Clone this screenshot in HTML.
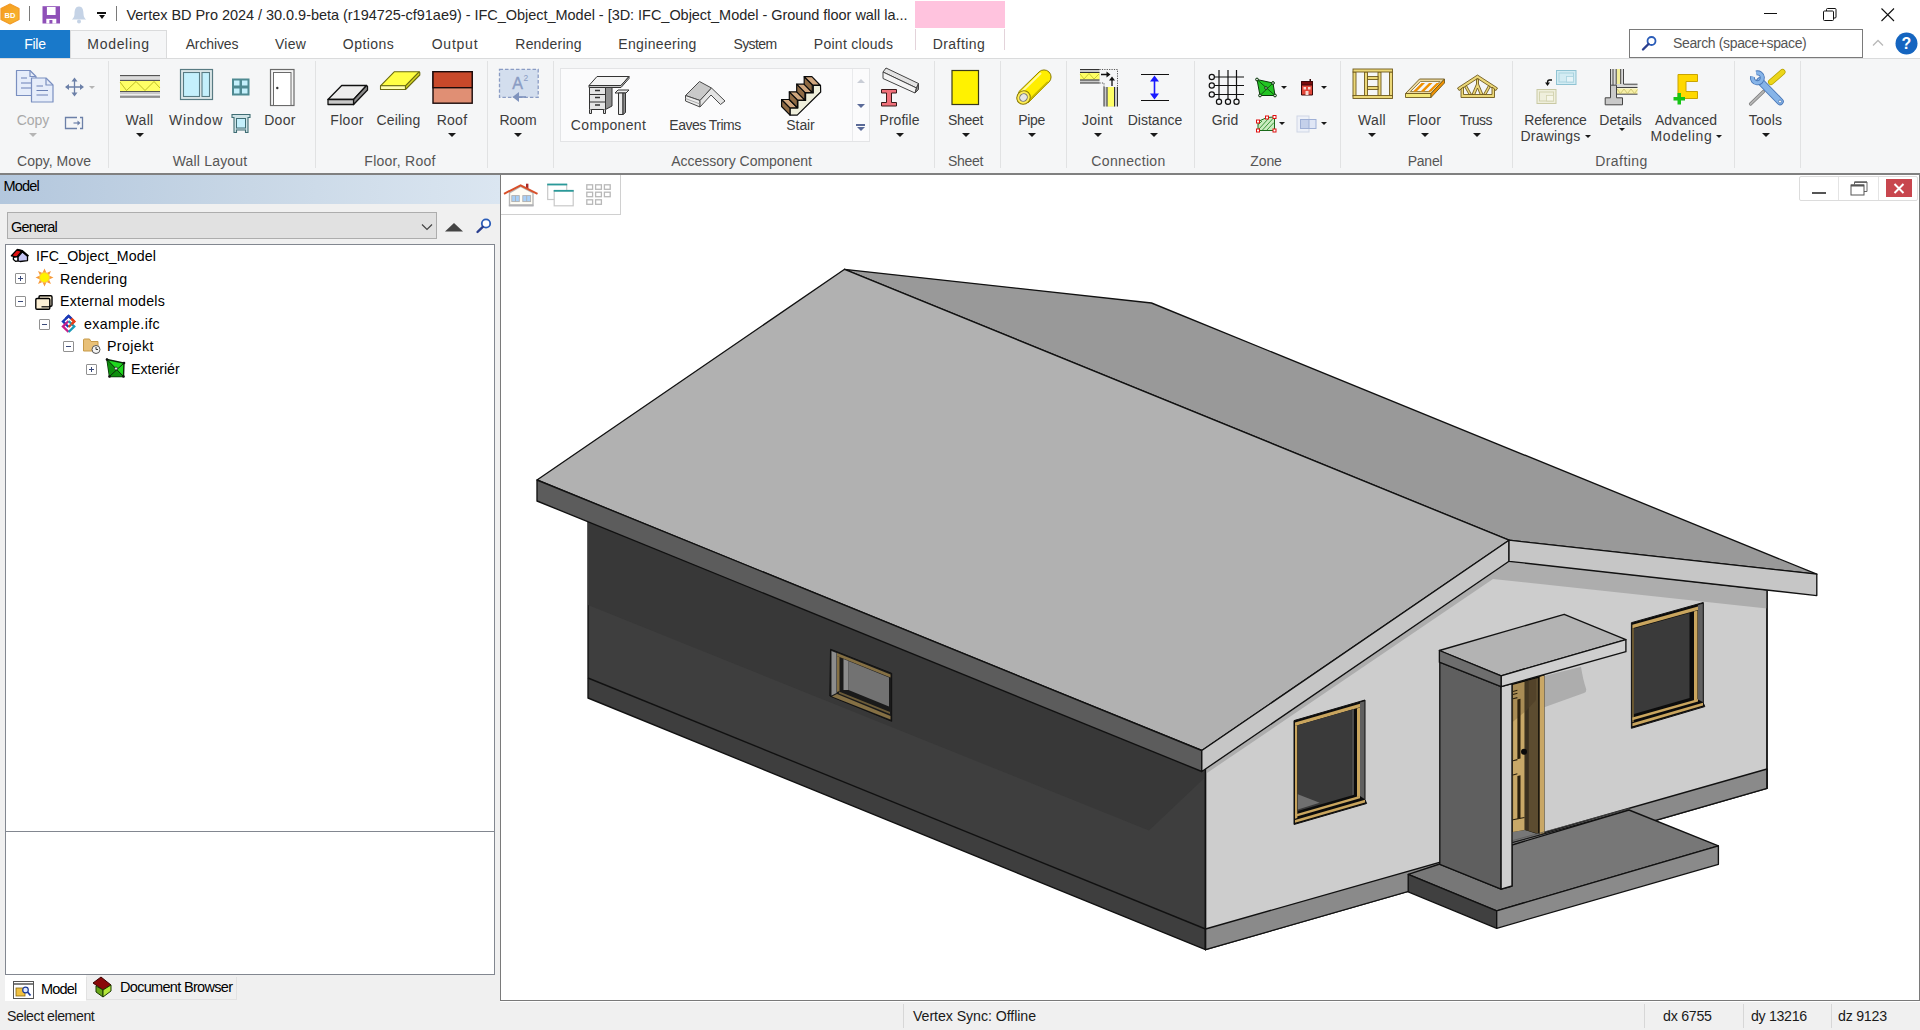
<!DOCTYPE html>
<html><head><meta charset="utf-8"><title>Vertex BD</title>
<style>
*{box-sizing:border-box;margin:0;padding:0}
html,body{width:1920px;height:1030px;overflow:hidden;background:#fff}
body{font-family:"Liberation Sans",sans-serif;font-size:12px;color:#222;position:relative}
.abs{position:absolute}
#title{position:absolute;left:0;top:0;width:1920px;height:30px;background:#fff}
#title .t{position:absolute;left:126.500px;top:6.500px;font-size:14.5px;color:#262626;white-space:nowrap}
#pink{position:absolute;left:915px;top:1px;width:90px;height:27px;background:#ffc3de}
#tabs{position:absolute;left:0;top:30px;width:1920px;height:28px;background:#fff}
.tab{position:absolute;top:0;height:27px;line-height:28px;font-size:14px;color:#3a3a3a;white-space:nowrap;transform:translateX(-50%)}
#filetab{position:absolute;left:0;top:-0.500px;width:70px;height:28px;background:#1979ca;color:#fff;text-align:center;line-height:28px;font-size:14px}
#modtab{position:absolute;left:70px;top:-0.500px;width:97px;height:29px;background:#f5f6f7;border:1px solid #dadbdc;border-bottom:none}
#drafttab{position:absolute;left:915px;top:-1px;width:90px;height:21px;border-left:1px solid #e3d3da;border-right:1px solid #e3d3da}
#ribbon{position:absolute;left:0;top:57.500px;width:1920px;height:116px;background:#f5f6f7;border-top:1px solid #dadbdc}
#ribline{position:absolute;left:0;top:173px;width:1920px;height:2px;background:#808080;z-index:5}
.sep{position:absolute;top:6px;width:1px;height:104px;background:#e1e2e3}
.lbl{position:absolute;font-size:14px;color:#3c3c3c;white-space:nowrap;transform:translateX(-50%);line-height:16px;text-align:center}
.lbl.dis{color:#a9a9a9}
.grp{position:absolute;top:96px;font-size:14px;color:#555;white-space:nowrap;transform:translateX(-50%);line-height:16px}
.dd{position:absolute;width:0;height:0;border-left:4px solid transparent;border-right:4px solid transparent;border-top:4px solid #1a1a1a;transform:translateX(-50%)}
.dd.s{border-left-width:3px;border-right-width:3px;border-top-width:3px}
.dd.g{border-top-color:#b5b5b5}
svg{position:absolute;overflow:visible}
#left{position:absolute;left:0;top:174px;width:500px;height:828px;background:#f0f0f0}
#lhead{position:absolute;left:0;top:1px;width:500px;height:29px;background:linear-gradient(90deg,#b3c7dd 0%,#c8d7e6 50%,#dbe6f1 100%)}
#lhead span{position:absolute;left:3.500px;top:2.500px;font-size:14.5px;color:#000;white-space:nowrap}
#combo{position:absolute;left:7px;top:38px;width:430px;height:27px;background:#e1e1e1;border:1px solid #adadad}
#combo span{position:absolute;left:3px;top:6px;font-size:14.5px;color:#000;white-space:nowrap}
#tree{position:absolute;left:5px;top:70px;width:490px;height:588px;background:#fff;border:1px solid #828790}
#tree2{position:absolute;left:5px;top:657px;width:490px;height:144px;background:#fff;border:1px solid #828790}
.tn{position:absolute;font-size:14.2px;color:#000;white-space:nowrap;line-height:18px}
.ex{position:absolute;width:11px;height:11px;border:1px solid #919191;background:#fff;border-radius:1px}
.ex:before{content:"";position:absolute;left:2px;top:4px;width:5px;height:1px;background:#3a4a7a}
.ex.p:after{content:"";position:absolute;left:4px;top:2px;width:1px;height:5px;background:#3a4a7a}
#view{position:absolute;left:500px;top:174px;width:1420px;height:827px;background:#fff;border:1px solid #7a7a7a;border-top:none}
#status{position:absolute;left:0;top:1002px;width:1920px;height:28px;background:#f0f0f0}
#status span{position:absolute;top:6px;font-size:14.2px;color:#1a1a1a;white-space:nowrap}
.ssep{position:absolute;top:2px;width:1px;height:24px;background:#d7d7d7}
</style></head><body>
<div id="title">
<svg style="left:0;top:3px" width="22" height="24" viewBox="0 0 22 24"><defs><linearGradient id="bdg" x1="0" y1="0" x2="1" y2="1"><stop offset="0" stop-color="#f59a1e"></stop><stop offset="1" stop-color="#f7b731"></stop></linearGradient></defs><path d="M10 1 L19 5.5 L19 16.5 L10 21 L1 16.5 L1 5.5 Z" fill="url(#bdg)" stroke="#f39a25" stroke-width="1.2" stroke-linejoin="round"></path><text x="10" y="14.5" font-family="Liberation Sans" font-size="7.5" font-weight="bold" fill="#fff" text-anchor="middle">BD</text></svg>
<div class="abs" style="left:29px;top:6px;width:1px;height:15px;background:#7a7a7a"></div>
<svg style="left:42px;top:6px" width="19" height="18" viewBox="42 6 19 18"><rect x="42.500" y="6.200" width="17.500" height="17.300" fill="#8f50b8"></rect><rect x="46.900" y="7" width="8.700" height="8" fill="#fff"></rect><rect x="46.300" y="18.800" width="10" height="4.700" fill="#fff"></rect><rect x="49.400" y="20" width="3" height="3.500" fill="#8f50b8"></rect></svg>
<svg style="left:71px;top:6px" width="16" height="19" viewBox="0 0 16 19"><path d="M8 0.5 C4.5 0.5 3.5 4 3.5 8 C3.5 11 2 12.5 0.8 13.5 H15.2 C14 12.5 12.500 11 12.500 8 C12.500 4 11.500 0.5 8 0.5 Z" fill="#c5d3e6"></path><circle cx="8" cy="15.500" r="2" fill="#c5d3e6"></circle></svg>
<div class="abs" style="left:97px;top:12px;width:9px;height:1.5px;background:#111"></div>
<div class="dd" style="left:101.500px;top:15px;border-top-color:#111;border-left-width:3.5px;border-right-width:3.5px"></div>
<div class="abs" style="left:116px;top:6px;width:1px;height:15px;background:#7a7a7a"></div>
<div class="t" style="letter-spacing: -0.034px;">Vertex BD Pro 2024 / 30.0.9-beta (r194725-cf91ae9) - IFC_Object_Model - [3D: IFC_Object_Model - Ground floor wall la...</div>
<div id="pink"></div>
<div class="abs" style="left:1764px;top:13px;width:13px;height:1px;background:#111"></div>
<svg style="left:1823px;top:7.500px" width="14" height="13" viewBox="0 0 14 13"><path d="M3.500 3 V1.5 Q3.500 0.500 4.500 0.500 H12 Q13 0.500 13 1.500 V9 Q13 10 12 10 H10.500" fill="none" stroke="#111" stroke-width="1"></path><rect x="0.500" y="3" width="10" height="9.500" rx="1" fill="#fff" stroke="#111" stroke-width="1"></rect></svg>
<svg style="left:1881px;top:7.500px" width="14" height="14" viewBox="0 0 14 14"><path d="M0.500 0.500 L13 13 M13 0.500 L0.500 13" stroke="#111" stroke-width="1.1"></path></svg>
</div>
<div id="tabs">
<div id="modtab"></div>
<div id="filetab"><span style="letter-spacing: -0.316px;">File</span></div>
<div id="drafttab"></div>
<div class="tab" style="left: 118.5px; letter-spacing: 0.684px;">Modeling</div>
<div class="tab" style="left: 212px; letter-spacing: -0.123px;">Archives</div>
<div class="tab" style="left: 290.5px; letter-spacing: 0.227px;">View</div>
<div class="tab" style="left: 368.5px; letter-spacing: 0.436px;">Options</div>
<div class="tab" style="left: 455px; letter-spacing: 0.778px;">Output</div>
<div class="tab" style="left: 548.5px; letter-spacing: 0.188px;">Rendering</div>
<div class="tab" style="left: 657.5px; letter-spacing: 0.324px;">Engineering</div>
<div class="tab" style="left: 755px; letter-spacing: -0.615px;">System</div>
<div class="tab" style="left: 853.5px; letter-spacing: 0.252px;">Point clouds</div>
<div class="tab" style="left: 959px; letter-spacing: 0.459px;">Drafting</div>
<div class="abs" style="left:1629px;top:-1px;width:234px;height:29px;background:#fff;border:1px solid #7a7a7a"></div>
<svg style="left:1641px;top:5px" width="18" height="18" viewBox="0 0 18 18"><circle cx="10.500" cy="6" r="4" fill="#fff" stroke="#2a5cb8" stroke-width="1.800"></circle><path d="M7.500 9 L2 14.500" stroke="#2a3f8f" stroke-width="2.400" stroke-linecap="round"></path></svg>
<div class="abs" style="left: 1673px; top: 5px; font-size: 14px; color: rgb(85, 85, 85); white-space: nowrap; letter-spacing: -0.353px;">Search (space+space)</div>
<svg style="left:1872px;top:9px" width="12" height="8" viewBox="0 0 12 8"><path d="M1 6.500 L6 1.500 L11 6.500" fill="none" stroke="#b9b9b9" stroke-width="1.300"></path></svg>
<svg style="left:1895px;top:2px" width="23" height="23" viewBox="0 0 23 23"><circle cx="11.500" cy="11.500" r="11" fill="#1565c0"></circle><text x="11.500" y="17" font-family="Liberation Sans" font-size="16" font-weight="bold" fill="#fff" text-anchor="middle">?</text></svg>
</div>
<div id="ribbon"></div><div id="ribline"></div>
<!-- separators -->
<div class="sep" style="left:108px;top:61px;height:107px"></div><div class="sep" style="left:315px;top:61px;height:107px"></div><div class="sep" style="left:487px;top:61px;height:107px"></div><div class="sep" style="left:553px;top:61px;height:107px"></div><div class="sep" style="left:934px;top:61px;height:107px"></div><div class="sep" style="left:1000px;top:61px;height:107px"></div><div class="sep" style="left:1066px;top:61px;height:107px"></div><div class="sep" style="left:1194px;top:61px;height:107px"></div><div class="sep" style="left:1340px;top:61px;height:107px"></div><div class="sep" style="left:1512px;top:61px;height:107px"></div><div class="sep" style="left:1734px;top:61px;height:107px"></div><div class="sep" style="left:1800px;top:61px;height:107px"></div>
<!-- group labels -->
<div class="grp" style="left: 54px; top: 153px; letter-spacing: 0.033px;">Copy, Move</div>
<div class="grp" style="left: 210px; top: 153px; letter-spacing: 0.189px;">Wall Layout</div>
<div class="grp" style="left: 400px; top: 153px; letter-spacing: 0.256px;">Floor, Roof</div>
<div class="grp" style="left: 741.5px; top: 153px; letter-spacing: -0.008px;">Accessory Component</div>
<div class="grp" style="left: 965.5px; top: 153px; letter-spacing: -0.319px;">Sheet</div>
<div class="grp" style="left: 1128.5px; top: 153px; letter-spacing: 0.347px;">Connection</div>
<div class="grp" style="left: 1266px; top: 153px; letter-spacing: -0.055px;">Zone</div>
<div class="grp" style="left: 1425px; top: 153px; letter-spacing: -0.222px;">Panel</div>
<div class="grp" style="left: 1621.5px; top: 153px; letter-spacing: 0.459px;">Drafting</div>
<!-- button labels -->
<div class="lbl dis" style="left: 33px; top: 112px; letter-spacing: -0.097px;">Copy</div><div class="dd g" style="left:33px;top:133px"></div>
<div class="lbl" style="left: 139.5px; top: 112px; letter-spacing: 0.324px;">Wall</div><div class="dd" style="left:139.500px;top:133px"></div>
<div class="lbl" style="left: 196px; top: 112px; letter-spacing: 0.701px;">Window</div>
<div class="lbl" style="left: 280px; top: 112px; letter-spacing: 0.335px;">Door</div>
<div class="lbl" style="left: 347px; top: 112px; letter-spacing: 0.279px;">Floor</div>
<div class="lbl" style="left: 398.5px; top: 112px; letter-spacing: 0.17px;">Ceiling</div>
<div class="lbl" style="left: 452px; top: 112px; letter-spacing: 0.28px;">Roof</div><div class="dd" style="left:452px;top:133px"></div>
<div class="lbl" style="left: 518px; top: 112px; letter-spacing: -0.09px;">Room</div><div class="dd" style="left:518px;top:133px"></div>
<div class="abs" style="left:560px;top:68px;width:310px;height:74px;background:#fbfbfc;border:1px solid #e3e4e6"></div>
<div class="abs" style="left:852px;top:69px;width:1px;height:72px;background:#e9eaec"></div>
<div class="lbl" style="left: 608.5px; top: 117px; letter-spacing: 0.323px;">Component</div>
<div class="lbl" style="left: 705px; top: 117px; letter-spacing: -0.52px;">Eaves Trims</div>
<div class="lbl" style="left: 800.5px; top: 117px; letter-spacing: -0.099px;">Stair</div>
<div class="dd" style="left:860.500px;top:79px;border-top:none;border-bottom:4px solid #c9cdd6"></div>
<div class="dd" style="left:860.500px;top:104px;border-top-color:#5a6a98"></div>
<div class="abs" style="left:856px;top:124px;width:9px;height:1.500px;background:#5a6a98"></div>
<div class="dd" style="left:860.500px;top:127px;border-top-color:#5a6a98"></div>
<div class="lbl" style="left: 899.5px; top: 112px; letter-spacing: 0.045px;">Profile</div><div class="dd" style="left:899.500px;top:133px"></div>
<div class="lbl" style="left: 965.5px; top: 112px; letter-spacing: -0.319px;">Sheet</div><div class="dd" style="left:965.500px;top:133px"></div>
<div class="lbl" style="left: 1031.5px; top: 112px; letter-spacing: -0.333px;">Pipe</div><div class="dd" style="left:1031.500px;top:133px"></div>
<div class="lbl" style="left: 1097.5px; top: 112px; letter-spacing: 0.284px;">Joint</div><div class="dd" style="left:1097.500px;top:133px"></div>
<div class="lbl" style="left: 1155px; top: 112px; letter-spacing: 0.029px;">Distance</div><div class="dd" style="left:1154px;top:133px"></div>
<div class="lbl" style="left: 1225px; top: 112px; letter-spacing: 0.062px;">Grid</div>
<div class="lbl" style="left: 1372px; top: 112px; letter-spacing: 0.324px;">Wall</div><div class="dd" style="left:1372px;top:133px"></div>
<div class="lbl" style="left: 1424.5px; top: 112px; letter-spacing: 0.279px;">Floor</div><div class="dd" style="left:1424.500px;top:133px"></div>
<div class="lbl" style="left: 1476px; top: 112px; letter-spacing: -0.437px;">Truss</div><div class="dd" style="left:1476.500px;top:133px"></div>
<div class="lbl" style="left: 1555.5px; top: 112px; letter-spacing: -0.255px;">Reference</div>
<div class="lbl" style="left: 1550.5px; top: 128px; letter-spacing: 0.205px;">Drawings</div><div class="dd s" style="left:1588px;top:135px"></div>
<div class="lbl" style="left: 1620.5px; top: 112px; letter-spacing: -0.071px;">Details</div><div class="dd s" style="left:1621.500px;top:128px"></div>
<div class="lbl" style="left: 1686px; top: 112px; letter-spacing: -0.048px;">Advanced</div>
<div class="lbl" style="left: 1681.5px; top: 128px; letter-spacing: 0.634px;">Modeling</div><div class="dd s" style="left:1719px;top:135px"></div>
<div class="lbl" style="left: 1765.5px; top: 112px; letter-spacing: 0.163px;">Tools</div><div class="dd" style="left:1765.500px;top:133px"></div>
<!-- small dropdown arrows -->
<div class="dd s g" style="left:92px;top:85.500px"></div>
<div class="dd s" style="left:1284px;top:85.500px"></div><div class="dd s" style="left:1324px;top:85.500px"></div>
<div class="dd s" style="left:1282px;top:121.500px"></div><div class="dd s" style="left:1324px;top:121.500px"></div>
<svg style="left:0;top:58px" width="1920" height="115" viewBox="0 58 1920 115">
<!-- Copy -->
<g fill="#e6edfa" stroke="#7a8fc0" stroke-width="1.200" stroke-linejoin="round">
<path d="M16.500 70.500 H30 L36 76.500 V95.500 H16.500 Z"></path><path d="M30 70.500 V76.500 H36" fill="none"></path>
<path d="M21 78 H27 M21 83 H31 M21 88 H31" stroke="#6a80b5" stroke-width="1.200"></path>
<path d="M31.500 78 H46 L53 85 V102 H31.500 Z"></path><path d="M46 78 V85 H53" fill="none"></path>
<path d="M36.500 86 H43 M36.500 90.500 H48 M36.500 95 H48" stroke="#6a80b5" stroke-width="1.200"></path>
</g>
<!-- Move -->
<g stroke="#6c80a8" stroke-width="1.300" fill="#6c80a8" stroke-linejoin="miter">
<path d="M74.500 79 V95 M66.500 87 H82.500" fill="none"></path>
<path d="M74.500 77.500 L71.500 81.500 H77.500 Z M74.500 96.500 L71.500 92.500 H77.500 Z M65 87 L69 84 V90 Z M84 87 L80 84 V90 Z" stroke="none"></path>
</g>
<!-- small move-rect -->
<g stroke="#6c80a8" stroke-width="1.300" fill="none">
<path d="M77 117.500 H65.500 V128.500 H77 M80 117.500 H82.500 V128.500 H80"></path>
<path d="M73.500 123 H79" stroke-width="1.200"></path><path d="M80.500 123 L77.500 120.500 V125.500 Z" fill="#6c80a8" stroke="none"></path>
</g>
<!-- Wall -->
<rect x="120" y="75" width="40" height="22.500" fill="#c9c9c9"></rect>
<rect x="120" y="80.500" width="40" height="11" fill="#ffff66"></rect>
<path d="M120 75.500 H160 M120 80.500 H160 M120 91.500 H160 M120 97 H160" stroke="#555" stroke-width="1"></path>
<path d="M120 78 H160 M120 94.500 H160" stroke="#eee" stroke-width="1"></path>
<path d="M120 82 L126.500 90.500 L136 81.500 L145 90.500 L154 81.500 L160 88" fill="none" stroke="#b5b51e" stroke-width="0.900"></path>
<!-- Window -->
<rect x="180.500" y="69.500" width="32" height="30" fill="#dfe9ea" stroke="#587b83" stroke-width="1.200"></rect>
<rect x="183.500" y="72.500" width="16" height="24" fill="#c4f0fc" stroke="#587b83" stroke-width="1.100"></rect>
<rect x="202" y="72.500" width="7.500" height="24" fill="#c4f0fc" stroke="#587b83" stroke-width="1.100"></rect>
<!-- small window grid -->
<rect x="232" y="78.500" width="17.500" height="17" fill="#4f8a92"></rect>
<rect x="234" y="80.500" width="5.500" height="5" fill="#c4f0fc"></rect><rect x="242" y="80.500" width="5.500" height="5" fill="#c4f0fc"></rect><rect x="234" y="88.500" width="5.500" height="5" fill="#c4f0fc"></rect><rect x="242" y="88.500" width="5.500" height="5" fill="#c4f0fc"></rect>
<!-- small frame icon -->
<path d="M232 114.500 H250 V117.500 H248 V132.500 H245.500 V130 H236.500 V132.500 H234 V117.500 H232 Z" fill="#cfe3e6" stroke="#3f6d74" stroke-width="1.100"></path>
<rect x="236.500" y="118.500" width="9" height="9.500" fill="#c4f0fc" stroke="#3f6d74" stroke-width="1"></rect>
<!-- Door -->
<rect x="270.500" y="69.500" width="23.500" height="36" fill="#f4f4f4" stroke="#6a6a6a" stroke-width="1.200"></rect>
<rect x="273.500" y="72.500" width="17.500" height="33" fill="#fff" stroke="#6a6a6a" stroke-width="1"></rect>
<circle cx="277.300" cy="88" r="1.200" fill="#333"></circle>
<!-- Floor -->
<path d="M328 99.500 L341.700 85.500 H366.500 L353.600 99.500 Z" fill="#ededed" stroke="#111" stroke-width="1.300" stroke-linejoin="round"></path>
<path d="M328 99.500 H353.600 V104.500 H328 Z" fill="#c9c9c9" stroke="#111" stroke-width="1.300" stroke-linejoin="round"></path>
<path d="M353.600 99.500 L366.500 85.500 L367.500 86.500 V90 L353.600 104.500 Z" fill="#8a8a8a" stroke="#111" stroke-width="1.300" stroke-linejoin="round"></path>
<!-- Ceiling -->
<path d="M380.500 85.800 L394.200 71.800 H419.200 L405.500 85.800 Z" fill="#ffff44" stroke="#6a6a10" stroke-width="1.100" stroke-linejoin="round"></path>
<path d="M380.500 85.800 H405.500 V89.500 H380.500 Z" fill="#ffffb0" stroke="#6a6a10" stroke-width="1.100" stroke-linejoin="round"></path>
<path d="M405.500 85.800 L419.200 71.800 L419.800 72.500 V75 L405.500 89.500 Z" fill="#d8d820" stroke="#6a6a10" stroke-width="1.100" stroke-linejoin="round"></path>
<!-- Roof -->
<rect x="433" y="71.700" width="39.200" height="31.500" fill="#e08f74" stroke="#1a0a0a" stroke-width="1.400"></rect>
<rect x="433" y="71.700" width="39.200" height="16" fill="#c8492a" stroke="#1a0a0a" stroke-width="1.400"></rect>
<!-- Room -->
<rect x="499.500" y="69.300" width="38.700" height="28" fill="#d3deee" stroke="#8a9cc4" stroke-width="1.300" stroke-dasharray="3.500 2"></rect>
<text x="517.500" y="89" font-family="Liberation Sans" font-size="16" fill="#8a9cc4" stroke="#8a9cc4" stroke-width="0.400" text-anchor="middle">A</text>
<text x="525.800" y="80.500" font-family="Liberation Sans" font-size="8.500" fill="#8a9cc4" text-anchor="middle">2</text>
<path d="M517 97 H526" stroke="#7f93bd" stroke-width="1.600"></path><path d="M512.500 97 L519 92 V102 Z" fill="#7f93bd"></path>
<!-- Component (desk) -->
<g stroke="#333" stroke-width="1" stroke-linejoin="round">
<path d="M589 85.500 L597 76.500 H629 L621 85.500 Z" fill="#f4f4f4"></path>
<path d="M589 85.500 H621 L629 76.500 V78.500 L621 87.500 H589 Z" fill="#c8c8c8"></path>
<rect x="589.500" y="87.500" width="16" height="22" fill="#e4e4e4"></rect>
<path d="M605.500 87.500 H612 V106 L605.500 109.500 Z" fill="#8f8f8f"></path>
<path d="M589.500 94.500 H605.500 M589.500 102 H605.500" fill="none"></path>
<path d="M595 90.500 H600 M595 97.500 H600 M595 105 H600" stroke-width="1.300"></path>
<path d="M589.500 109.500 V113.500 H591.500 V109.500 M603.500 109.500 V113.500 H605.500 V109.500" fill="#ddd"></path>
<path d="M615 93 L618 90 H629 L626 93 Z" fill="#f0f0f0"></path>
<path d="M618.500 93 H623 V114.500 H618.500 Z" fill="#e9e9e9"></path><path d="M623 93 H625.500 V112.500 L623 114.500 Z" fill="#8f8f8f"></path>
</g>
<!-- Eaves trims -->
<g stroke="#4a4a4a" stroke-width="1" stroke-linejoin="round">
<path d="M685.500 95.500 L699.500 81.500 L711.500 88 L700 100.500 Z" fill="#c9c9c9"></path>
<path d="M685.500 95.500 L700 100.500 V107 L685.500 101 Z" fill="#ececec"></path>
<path d="M700 100.500 L711.500 88 L725 101 L720.500 104.500 L711 95 L700 107 Z" fill="#e4e4e4"></path>
<path d="M685.500 98.500 L700 104" stroke="#9a9a9a" stroke-width="0.800" fill="none"></path>
</g>
<!-- Stair -->
<g stroke="#0a0a0a" stroke-width="1.200" stroke-linejoin="round"><path d="M790.0 107.9 L797.9 107.9 L797.9 100.4 L805.6 100.4 L805.6 93.0 L813.3 93.0 L813.3 85.3 L820.5 85.3 L820.7 92.0 L797.2 115.1 L790.0 115.1 Z" fill="#eeeedb"></path><path d="M781.6 99.5 L790.0 107.9 L790.0 115.1 L781.6 106.5 Z" fill="#8f6a44"></path><path d="M781.6 99.5 L789.3 99.5 L797.4 107.8 L790.0 107.9 Z" fill="#d0a67e"></path><path d="M789.3 91.8 L797.4 100.0 L797.4 107.6 L789.3 99.5 Z" fill="#8f6a44"></path><path d="M789.3 91.8 L797.0 91.8 L805.1 100.1 L797.7 100.2 Z" fill="#d0a67e"></path><path d="M796.7 84.2 L804.9 92.4 L804.9 100.1 L796.7 91.9 Z" fill="#8f6a44"></path><path d="M796.7 84.2 L804.4 84.2 L812.6 92.5 L805.1 92.6 Z" fill="#d0a67e"></path><path d="M804.2 76.7 L812.3 84.8 L812.3 92.5 L804.2 84.3 Z" fill="#8f6a44"></path><path d="M804.2 76.7 L811.9 76.7 L820.0 85.0 L812.6 85.0 Z" fill="#d0a67e"></path></g>
<!-- Profile -->
<g stroke="#444" stroke-width="1" stroke-linejoin="round">
<path d="M883 72 L886 68 L918.500 83.500 L916.500 88 Z" fill="#e3e3e3"></path>
<path d="M883 72 L916.500 88 L915 93 L883 78.500 Z" fill="#f4f4f4"></path>
<path d="M916.500 88 L918.500 83.500 V89.500 L915 93 Z" fill="#8a8a8a"></path>
<path d="M881.500 89.500 H896.500 V93 H891.500 V102.500 H896.500 V106 H881.500 V102.500 H886.500 V93 H881.500 Z" fill="#f0707a" stroke="#3a1a1a"></path>
</g>
<!-- Sheet -->
<rect x="952" y="70.500" width="26.500" height="34" fill="#fff200" stroke="#3a3a1a" stroke-width="1.200"></rect>
<!-- Pipe -->
<g stroke="#8a7a00" stroke-width="1">
<path d="M1018.500 92 L1039 72 A7 7 0 0 1 1049 82 L1028.500 102.500 Z" fill="#ffee00"></path>
<path d="M1021 92.500 L1041 73" stroke="#fff9a0" stroke-width="2" fill="none"></path>
<path d="M1027.500 102 L1048 82" stroke="#c9b800" stroke-width="2" fill="none"></path>
<ellipse cx="1023.500" cy="97.500" rx="7" ry="6.500" transform="rotate(-45 1023.500 97.500)" fill="#ffee55"></ellipse>
<ellipse cx="1023.500" cy="97.500" rx="4" ry="3.600" transform="rotate(-45 1023.500 97.500)" fill="#e6e6e6" stroke="#777"></ellipse>
</g>
<!-- Joint -->
<rect x="1080" y="69.500" width="19.500" height="13.500" fill="#c9c9c9"></rect>
<rect x="1080" y="73" width="19.500" height="6.500" fill="#ffff66"></rect>
<path d="M1080 69.500 H1099.500 M1080 72.500 H1099.500 M1080 80 H1099.500 M1080 83 H1099.500" stroke="#333" stroke-width="1"></path>
<path d="M1080 74 L1084 79 L1089 73.500 L1094 79 L1099 74" stroke="#b5b51e" stroke-width="0.700" fill="none"></path>
<rect x="1104" y="87" width="13.500" height="19.500" fill="#c9c9c9"></rect>
<rect x="1107.500" y="87" width="6.500" height="19.500" fill="#ffff66"></rect>
<path d="M1104 87 V106.500 M1107 87 V106.500 M1114.500 87 V106.500 M1117.500 87 V106.500" stroke="#333" stroke-width="1"></path>
<path d="M1099.500 69.500 H1117.500 V87 M1099.500 83 H1104 V87" stroke="#555" stroke-width="1" stroke-dasharray="1.200 1.200" fill="none"></path>
<path d="M1101 74.500 H1107 M1112 86 V80" stroke="#111" stroke-width="1.300"></path>
<path d="M1110.500 74.500 L1106.500 71.500 V77.500 Z M1112 76.500 L1109 80.500 H1115 Z" fill="#111"></path>
<!-- Distance -->
<path d="M1141 74.500 H1169 M1141 100.500 H1169" stroke="#111" stroke-width="1.200"></path>
<path d="M1154.500 79 V96" stroke="#1a1aff" stroke-width="1.600"></path>
<path d="M1154.500 75.500 L1150 81.500 H1159 Z M1154.500 99.500 L1150 93.500 H1159 Z" fill="#1a1aff"></path>
<!-- Grid -->
<g stroke="#111" stroke-width="1.200" fill="#f5f6f7">
<path d="M1219 70 V99 M1228 70 V99 M1236.500 70 V99 M1214.500 77 H1244 M1214.500 85.500 H1244 M1214.500 94.500 H1244" fill="none"></path>
<circle cx="1211.800" cy="77" r="2.600"></circle><circle cx="1211.800" cy="85.500" r="2.600"></circle><circle cx="1211.800" cy="94.500" r="2.600"></circle>
<circle cx="1219" cy="101.800" r="2.600"></circle><circle cx="1228" cy="101.800" r="2.600"></circle><circle cx="1236.500" cy="101.800" r="2.600"></circle>
</g>
<!-- green zone -->
<g stroke="#0a3a0a" stroke-width="1">
<path d="M1257 79.500 L1273 83 L1275 95.500 L1260 95.500 Z" fill="#22c422"></path>
<path d="M1257 79.500 L1275 95.500 M1273 83 L1260 95.500" fill="none" stroke-width="0.800"></path>
<circle cx="1257" cy="79.500" r="1.400" fill="#ddd"></circle><circle cx="1273" cy="83" r="1.400" fill="#ddd"></circle><circle cx="1275" cy="95.500" r="1.400" fill="#ddd"></circle><circle cx="1260" cy="95.500" r="1.400" fill="#ddd"></circle><circle cx="1266" cy="88" r="1.300" fill="#ddd"></circle>
</g>
<!-- red building -->
<path d="M1301.500 81.500 H1312.500 V95 H1301.500 Z" fill="#e2473a" stroke="#3a0a0a" stroke-width="1"></path>
<path d="M1301.500 81.500 H1312.500 V85 H1301.500 Z" fill="#7a0a0a" stroke="#3a0a0a" stroke-width="1"></path>
<rect x="1309.500" y="79" width="1.500" height="2.500" fill="#3a0a0a"></rect>
<rect x="1303.500" y="87" width="2.500" height="2.500" fill="#f8d8d0"></rect><rect x="1308" y="87" width="2.500" height="2.500" fill="#f8d8d0"></rect><rect x="1305.500" y="91" width="3" height="4" fill="#f8d8d0"></rect>
<!-- green hatch -->
<path d="M1258 121.500 L1267 117.500 L1274.500 117 V130.500 H1258 Z" fill="#c9ecc0" stroke="#1a6a1a" stroke-width="1"></path>
<path d="M1259 129 L1268 119 M1262.500 130 L1273 118.500 M1267 130 L1274 122.500 M1258.500 124.500 L1262 121" stroke="#2a8a2a" stroke-width="0.900"></path>
<g fill="#fff" stroke="#e01010" stroke-width="1"><rect x="1256.500" y="120" width="3" height="3"></rect><rect x="1265.500" y="116" width="3" height="3"></rect><rect x="1273" y="115.500" width="3" height="3"></rect><rect x="1273" y="129" width="3" height="3"></rect><rect x="1256.500" y="129" width="3" height="3"></rect></g>
<!-- blue squares -->
<rect x="1297" y="116" width="12" height="16" fill="#eef1f8" stroke="#cfd6e6" stroke-width="1"></rect>
<rect x="1300.500" y="119.500" width="15.500" height="9" fill="#dfe6f5" stroke="#9fb0d6" stroke-width="1"></rect>
<rect x="1300.500" y="119.500" width="8.500" height="9" fill="#c4d0ea" stroke="#9fb0d6" stroke-width="1"></rect>
<!-- Panel wall -->
<g fill="#ecd878" stroke="#6f5a1e" stroke-width="0.900">
<rect x="1353" y="72" width="3" height="24"></rect><rect x="1364.500" y="72" width="3" height="24"></rect><rect x="1378" y="72" width="3" height="24"></rect><rect x="1389.500" y="72" width="3" height="24"></rect>
<rect x="1367.500" y="76.500" width="10.500" height="3"></rect><rect x="1367.500" y="86.500" width="10.500" height="3"></rect>
<rect x="1353" y="69" width="39.500" height="3"></rect><rect x="1353" y="95.500" width="39.500" height="3"></rect>
</g>
<!-- Panel floor -->
<g stroke="#6f5a1e" stroke-width="0.900" stroke-linejoin="round">
<path d="M1405.500 93.500 L1419.500 79 H1444.500 L1431 93.500 Z" fill="#ecd9a0"></path>
<path d="M1410.500 91.500 L1420.500 81.500 H1440 L1430 91.500 Z" fill="#f5f6f7" stroke-width="0.700"></path>
<path d="M1413 91.500 L1421.500 83 H1425 L1416.500 91.500 Z M1420.500 91.500 L1429 83 H1432.500 L1424 91.500 Z M1428 91.500 L1436.500 83 H1439.500 L1431 91.500 Z" fill="#f09000" stroke="none"></path>
<path d="M1405.500 93.500 H1431 V97.500 H1405.500 Z" fill="#f5e87a"></path>
<path d="M1431 93.500 L1444.500 79 V83 L1431 97.500 Z" fill="#f09000"></path>
</g>
<!-- Truss -->
<g stroke="#6f5a1e" stroke-width="0.900" stroke-linejoin="round" fill="#ecd878">
<path d="M1477.500 75 L1497.500 88 L1496 90.500 L1477.500 78.500 L1459 90.500 L1457.500 88 Z"></path>
<path d="M1461 88.800 V97.500 H1494.500 V88.800 L1492 87.200 V94.500 H1463.500 V87.200 Z"></path>
<path d="M1476.500 79 V84 L1472 94.500 H1474.800 L1477.500 88 L1480.200 94.500 H1483 L1478.500 84 V79 Z"></path>
<path d="M1466.500 85.500 L1471.500 94.500 H1469 L1464.800 87 Z M1488.500 85.500 L1483.500 94.500 H1486 L1490.200 87 Z"></path>
</g>
<!-- Reference drawings -->
<rect x="1556.500" y="70.500" width="19.500" height="14" fill="#d3ecf3" stroke="#8fc3d3" stroke-width="1"></rect>
<rect x="1559" y="73" width="14.500" height="9" fill="none" stroke="#a9d3df" stroke-width="1"></rect><rect x="1566.500" y="76.500" width="7" height="5.500" fill="#e6f4f8" stroke="#a9d3df" stroke-width="0.800"></rect>
<rect x="1537" y="89.500" width="19" height="14" fill="#efefdc" stroke="#c9c9a3" stroke-width="1"></rect>
<rect x="1539.500" y="92" width="14" height="9" fill="none" stroke="#d3d3b0" stroke-width="1"></rect><rect x="1546.500" y="95.500" width="7" height="5.500" fill="#f6f6e8" stroke="#d3d3b0" stroke-width="0.800"></rect>
<path d="M1552 80 H1549.500 Q1547.500 80 1547.500 82.500 V84" fill="none" stroke="#111" stroke-width="1.300"></path><path d="M1547.500 86 L1545 82.500 H1550 Z" fill="#111"></path>
<!-- Details -->
<g stroke="#444" stroke-width="1">
<rect x="1610.500" y="69" width="13" height="16" fill="#d9d9d9" stroke="none"></rect>
<rect x="1616.500" y="69" width="4" height="16" fill="#f3ee9a" stroke="none"></rect>
<path d="M1610.500 69 V86 M1613 69 V86 M1616.200 69 V85 M1620.700 69 V84 M1623.500 69 V84" fill="none"></path>
<rect x="1616.500" y="84" width="21" height="3.500" fill="#d9d9d9" stroke="none"></rect>
<rect x="1616.500" y="88.500" width="21" height="5.500" fill="#f7f0a8" stroke="none"></rect>
<path d="M1623.500 84.200 H1637.500 M1616.500 87.500 H1637.500 M1616.500 94.200 H1637.500" fill="none"></path>
<path d="M1617 89 L1620.500 93.500 L1624 89 L1627.500 93.500 L1631 89 L1634.500 93.500 L1637.500 89.500" fill="none" stroke="#c0b860" stroke-width="0.700"></path>
<path d="M1610.500 85.200 H1616.500 V97.800 H1622.500 V104.800 H1605.200 V97.800 H1610.500 Z" fill="#c9c9c9"></path>
</g>
<!-- Advanced modeling -->
<path d="M1678 74.500 H1697.500 V81.500 H1686 V91.500 H1697.500 V98.500 H1678 Z" fill="#ffd800" stroke="#caa400" stroke-width="1"></path>
<path d="M1677.500 93 H1681 V97 H1685 V100.500 H1681 V104.500 H1677.500 V100.500 H1673.500 V97 H1677.500 Z" fill="#16c416"></path>
<!-- Tools -->
<g stroke-linecap="round">
<path d="M1771 82 L1782.500 72" stroke="#b5a200" stroke-width="6"></path><path d="M1771 82 L1782.500 72" stroke="#ecd61a" stroke-width="4.500"></path>
<path d="M1750.500 104 L1763.500 91.500" stroke="#7a7a7a" stroke-width="3.200"></path><path d="M1750.500 104 L1763.500 91.500" stroke="#b5b5b5" stroke-width="1.800"></path>
<path d="M1760 81 L1780 101.500" stroke="#4a78b8" stroke-width="7.500"></path>
</g>
<path d="M1760 81 L1780 101.500" stroke="#86b4e8" stroke-width="5.500" stroke-linecap="round"></path>
<path d="M1756.200 73 A5 5 0 1 1 1752.500 76.700" fill="none" stroke="#4a78b8" stroke-width="5"></path>
<path d="M1756.200 73 A5 5 0 1 1 1752.500 76.700" fill="none" stroke="#86b4e8" stroke-width="3.200"></path>
<circle cx="1780" cy="101.500" r="1.500" fill="#f5f6f7" stroke="#4a78b8" stroke-width="0.800"></circle>
</svg>
<div id="left">
<div id="lhead"><span style="letter-spacing: -0.84px;">Model</span></div>
<div id="combo"><span style="letter-spacing: -0.799px;">General</span>
<svg style="left:413px;top:10px" width="12" height="8" viewBox="0 0 12 8"><path d="M1 1.500 L6 6.500 L11 1.500" fill="none" stroke="#444" stroke-width="1.200"></path></svg></div>
<svg style="left:444px;top:48px" width="20" height="11" viewBox="0 0 20 11"><path d="M1 9.500 L10 1 L19 9.500 Z" fill="#444"></path></svg>
<svg style="left:475px;top:43px" width="18" height="18" viewBox="0 0 18 18"><circle cx="11" cy="6.500" r="4.200" fill="#fff" stroke="#2a5cb8" stroke-width="1.800"></circle><path d="M7.800 9.800 L2.500 15" stroke="#2a3f8f" stroke-width="2.400" stroke-linecap="round"></path></svg>
<div id="tree">
<!-- coords inside tree: page x-6, page y-245 -->
<svg style="left:4px;top:2px" width="22" height="18" viewBox="10 247 22 18"><path d="M11.4 255.8 L17.1 249.6 L22.1 251.0 L16.7 257.1 Z" fill="#e01010" stroke="#000" stroke-width="1.300" stroke-linejoin="round"></path><path d="M13.4 257.4 L18.1 256.7 L18.1 260.9 L15.8 261.4 L13.4 259.5 Z" fill="#fff" stroke="#000" stroke-width="1.300" stroke-linejoin="round"></path><path d="M18.1 256.7 L22.5 251.8 L27.5 256.3 L27.5 260.6 L20.1 261.5 L18.1 260.9 Z" fill="#c5c5f5" stroke="#000" stroke-width="1.300" stroke-linejoin="round"></path><path d="M17.1 249.6 L22.1 251.0 L28.4 256.3" fill="none" stroke="#000" stroke-width="2"></path></svg>
<div class="tn" style="left: 30px; top: 2px; letter-spacing: 0.107px;">IFC_Object_Model</div>
<div class="ex p" style="left:9px;top:28px"></div>
<svg style="left:29px;top:23px" width="19" height="19" viewBox="0 0 19 19"><g fill="#f79a3a"><path d="M9.500 0.500 L11.300 4.500 H7.700 Z M9.500 18.500 L11.300 14.500 H7.700 Z M0.500 9.500 L4.500 7.700 V11.300 Z M18.500 9.500 L14.500 7.700 V11.300 Z M3 3 L7 4.800 L4.800 7 Z M16 3 L12 4.800 L14.200 7 Z M3 16 L7 14.200 L4.800 12 Z M16 16 L12 14.200 L14.200 12 Z"></path></g><circle cx="9.500" cy="9.500" r="5" fill="#fff200" stroke="#f7b03a" stroke-width="0.800"></circle></svg>
<div class="tn" style="left: 54px; top: 25px; letter-spacing: 0.203px;">Rendering</div>
<div class="ex" style="left:9px;top:51px"></div>
<svg style="left:29px;top:47px" width="20" height="18" viewBox="35 292 20 18"><rect x="39" y="295.800" width="13" height="10.500" rx="1.200" fill="#fdf0d5" stroke="#000" stroke-width="1.400"></rect><rect x="35.800" y="298.500" width="14" height="10.800" rx="1.200" fill="#fdf0d5" stroke="#000" stroke-width="1.400"></rect><path d="M41.500 306.800 H49.500" stroke="#000" stroke-width="1.200"></path></svg>
<div class="tn" style="left: 54px; top: 47px; letter-spacing: 0.218px;">External models</div>
<div class="ex" style="left:33px;top:74px"></div>
<svg style="left:53px;top:69px" width="19" height="19" viewBox="58 314 19 19" fill="none" stroke-width="2.400"><path d="M67.600 316 L62 321.500 L67.600 327" stroke="#1a3ab8"></path><path d="M67.600 316 L73.200 321.500 L67.600 327" stroke="#e8401a"></path><path d="M67.600 321 L62 326.500 L67.600 332" stroke="#c81e8a"></path><path d="M67.600 321 L73.200 326.500 L67.600 332" stroke="#1a9ab8"></path><path d="M64.800 318.700 L67.600 316 L70.400 318.700" stroke="#1a3ab8"></path><path d="M70.400 318.700 L73.200 321.500 L70.400 324.300" stroke="#e8401a"></path></svg>
<div class="tn" style="left: 78px; top: 70px; letter-spacing: 0.385px;">example.ifc</div>
<div class="ex" style="left:57px;top:96px"></div>
<svg style="left:76px;top:91px" width="20" height="19" viewBox="0 0 20 19"><path d="M1.500 4 V15 H16 V5.500 H9 L7.500 3 H2.500 Q1.500 3 1.500 4 Z" fill="#e8c078" stroke="#c79a48" stroke-width="1"></path><circle cx="14" cy="13.500" r="4" fill="#f4f4f4" stroke="#555" stroke-width="1"></circle><path d="M14 11 V13.500 H16" fill="none" stroke="#333" stroke-width="1"></path></svg>
<div class="tn" style="left: 101px; top: 92px; letter-spacing: 0.363px;">Projekt</div>
<div class="ex p" style="left:80px;top:119px"></div>
<svg style="left:99px;top:112px" width="22" height="22" viewBox="0 0 22 22"><path d="M2 2.500 L19 6 L18.500 19.500 L4.500 19.500 Z" fill="#1fd81f" stroke="#0a2a0a" stroke-width="1.400"></path><path d="M11 11.500 L18.500 19.500 L4.500 19.500 Z M11 11.500 L2 2.500 L4.500 19.500 Z" fill="#0d8f0d"></path><path d="M2 2.500 L18.500 19.500 M19 6 L4.500 19.500" stroke="#0a2a0a" stroke-width="1"></path><circle cx="2" cy="2.500" r="1.300" fill="#111"></circle><circle cx="19" cy="6" r="1.300" fill="#111"></circle><circle cx="18.500" cy="19.500" r="1.300" fill="#111"></circle><circle cx="4.500" cy="19.500" r="1.300" fill="#111"></circle><circle cx="11" cy="11.500" r="1.500" fill="#ddd" stroke="#111" stroke-width="0.600"></circle></svg>
<div class="tn" style="left: 125px; top: 115px; letter-spacing: -0.024px;">Exteriér</div>
</div>
<div id="tree2"></div>
<!-- bottom tabs -->
<div class="abs" style="left:5px;top:801px;width:81px;height:26px;background:#fff"></div>
<div class="abs" style="left:86px;top:803px;width:151px;height:23px;background:#f0f0f0;border:1px solid #e2e2e2;border-top:none"></div>
<svg style="left:13px;top:807px" width="21" height="18" viewBox="0 0 21 18"><rect x="0.500" y="0.500" width="20" height="17" fill="#fff" stroke="#555" stroke-width="1"></rect><path d="M0.500 3 H20.500" stroke="#555" stroke-width="1.500"></path><rect x="3" y="7" width="9" height="8" fill="#f0c040" stroke="#8a6a10" stroke-width="0.800"></rect><circle cx="12.500" cy="9" r="2.800" fill="#dfe8ff" stroke="#1a3a9a" stroke-width="1.200"></circle><path d="M14.500 11 L17.500 14.500" stroke="#1a3a9a" stroke-width="1.800"></path></svg>
<div class="abs" style="left: 41px; top: 807px; font-size: 14.5px; color: rgb(0, 0, 0); letter-spacing: -0.84px;">Model</div>
<svg style="left:92px;top:802px" width="22" height="22" viewBox="0 0 22 22"><path d="M1 7 L9 1 L19 9 L11 14 Z" fill="#8a0a0a" stroke="#3a0000" stroke-width="1"></path><path d="M4 10 L11 14 V21 L4 16 Z" fill="#6aa81a" stroke="#1a3a00" stroke-width="1"></path><path d="M11 14 L19 9 V15 L11 21 Z" fill="#b5e83a" stroke="#1a3a00" stroke-width="1"></path></svg>
<div class="abs" style="left: 120px; top: 805px; font-size: 14.5px; color: rgb(0, 0, 0); white-space: nowrap; letter-spacing: -0.687px;">Document Browser</div>
</div>
<div id="view"></div>
<div class="abs" style="left:501px;top:174px;width:120px;height:41px;background:#fff;border-right:1px solid #d0d0d0;border-bottom:1px solid #d0d0d0"></div>
<svg style="left:505px;top:180px" width="112" height="30" viewBox="505 180 112 30">
<path d="M509.500 193 V205 H533 V193 L520.600 186.500 Z" fill="#fffdf5" stroke="#b8b8b8" stroke-width="1.400"></path><path d="M508.800 205.600 H533.600" stroke="#b0b0b4" stroke-width="1.800"></path>
<rect x="526" y="183.700" width="2.400" height="5" fill="#a82a2a"></rect>
<path d="M504 193.800 L520.600 185.300 L537.500 193.800" fill="none" stroke="#d8502a" stroke-width="2"></path>
<rect x="511.800" y="195.600" width="7.500" height="6" fill="#a8d0f8" stroke="#b0b0b0" stroke-width="0.900"></rect><path d="M515.500 195.600 V201.600" stroke="#b0b0b0" stroke-width="0.900"></path>
<rect x="522.800" y="195.600" width="7.800" height="6" fill="#a8d0f8" stroke="#b0b0b0" stroke-width="0.900"></rect><path d="M526.700 195.600 V201.600" stroke="#b0b0b0" stroke-width="0.900"></path>
<rect x="547.700" y="184.500" width="19" height="15" fill="#fff" stroke="#c8c8c8" stroke-width="1.200"></rect><path d="M547.200 184.500 H567.200" stroke="#2a9a9a" stroke-width="1.800"></path>
<rect x="554.200" y="190.800" width="19" height="15" fill="#fff" stroke="#c8c8c8" stroke-width="1.200"></rect><path d="M553.700 190.800 H573.700" stroke="#2a9a9a" stroke-width="1.800"></path>
<g fill="#fff" stroke="#b8b8b8" stroke-width="1.300"><rect x="586.800" y="184.800" width="5.800" height="4.500"></rect><rect x="595.600" y="184.800" width="5.800" height="4.500"></rect><rect x="604.400" y="184.800" width="5.800" height="4.500"></rect><rect x="586.800" y="192.200" width="5.800" height="4.500"></rect><rect x="595.600" y="192.200" width="5.800" height="4.500"></rect><rect x="604.400" y="192.200" width="5.800" height="4.500"></rect><rect x="586.800" y="199.800" width="5.800" height="4.500"></rect><rect x="595.600" y="199.800" width="5.800" height="4.500"></rect></g>
</svg>
<!-- MDI buttons -->
<div class="abs" style="left:1799px;top:176px;width:119px;height:25px;background:#fff;border:1px solid #dcdcdc;border-radius:2px"></div>
<div class="abs" style="left:1838px;top:177px;width:1px;height:23px;background:#e4e4e4"></div><div class="abs" style="left:1878px;top:177px;width:1px;height:23px;background:#e4e4e4"></div>
<div class="abs" style="left:1812px;top:192px;width:14px;height:2px;background:#555"></div>
<svg style="left:1850px;top:181px" width="18" height="15" viewBox="0 0 18 15"><path d="M4.500 3.500 V1 H17 V10.500 H14" fill="none" stroke="#666" stroke-width="1"></path><path d="M4.500 1.200 H17" stroke="#666" stroke-width="1.600"></path><rect x="1" y="4" width="13" height="10" fill="#fff" stroke="#555" stroke-width="1"></rect><path d="M1 4.500 H14" stroke="#555" stroke-width="2"></path></svg>
<div class="abs" style="left:1886px;top:179px;width:26px;height:18px;background:#c8464e"></div>
<svg style="left:1893px;top:183px" width="12" height="11" viewBox="0 0 12 11"><path d="M1.500 1 L10.500 10 M10.500 1 L1.500 10" stroke="#fff" stroke-width="2"></path></svg>
<svg style="left:501px;top:174px" width="1418" height="826" viewBox="501 174 1418 826">
<g stroke="#111" stroke-width="1.350" stroke-linejoin="round">
<!-- dark long wall -->
<path d="M588 522 L1205.500 770 V949.700 L588 698 Z" fill="#3e3e3e"></path>
<path d="M588 522 L1205.500 770 V777 L1149 830.500 L588 605 Z" fill="#383838" stroke="none"></path>
<path d="M588 678 L1205.500 929" fill="none"></path>
<!-- gable wall -->
<path d="M1205.500 769 L1509 561.300 L1767 590.500 V788.400 L1205.500 949.700 Z" fill="#cdcdcd"></path>
<path d="M1205.500 769 L1509 561.300 L1767 590.500 V608.500 L1493 579 L1205.500 774 Z" fill="#adadad" stroke="none"></path>
<path d="M1205.500 929 L1767 769 V788.400 L1205.500 949.700 Z" fill="#8a8a8a"></path>
<path d="M1205.500 769 V949.700 M1767 590.500 V788.400" fill="none"></path>
<!-- roof planes -->
<path d="M844.600 269.300 L1151.500 303 L1816.800 574.200 L1509 540.200 Z" fill="#999"></path>
<path d="M844.600 269.300 L1509 540.200 L1201.800 750.500 L537 480 Z" fill="#b1b1b1"></path>
<path d="M537 480 L1201.800 750.500 V771.500 L537 501 Z" fill="#5c5c5c"></path>
<path d="M1201.800 750.500 L1509 540.200 V561.300 L1201.800 771.500 Z" fill="#c6c6c6"></path>
<path d="M1509 540.200 L1816.800 574.200 V595.600 L1509 561.300 Z" fill="#c6c6c6"></path>
</g>
<!-- small window on dark wall -->
<g stroke-linejoin="round">
<path d="M830.500 649.200 L891.700 673.300 V721.300 L829.800 696 Z" fill="#1a1a1a" stroke="#111" stroke-width="1"></path>
<path d="M831.500 651 L836.500 653 V693 L831.500 695.500 Z" fill="#8c8c8c"></path>
<path d="M837 653 L890.500 674.500 V677.500 L837 656 Z" fill="#857044"></path>
<path d="M837 656 L839.500 657 V691 L837 692 Z" fill="#857044"></path>
<path d="M843.500 659 L848.500 661 V690 L843.500 690 Z" fill="#8c8c8c"></path>
<path d="M848.500 661 L889 677.500 V706.500 L848.500 690 Z" fill="#727272"></path>
<path d="M832 696.500 L837 694 L890.500 716 V719.500 Z" fill="#857044"></path>
<path d="M839 691.500 L890 712 V714 L839 693.500 Z" fill="#6a5a38"></path>
</g>
<!-- window 1 -->
<g stroke-linejoin="round">
<path d="M1294 720.600 L1365 700 V799.600 L1366.600 803.500 L1294 824.500 Z" fill="#0c0c0c" stroke="#111" stroke-width="1"></path>
<path d="M1360 702.500 L1364.500 701.200 V799 L1360 796 Z" fill="#606060"></path>
<path d="M1295 722.500 L1360 703.700 V707.200 L1295 726 Z" fill="#c9a55e"></path>
<path d="M1295 726 L1297.300 725.300 V818 L1295 818.700 Z" fill="#c9a55e"></path>
<path d="M1357 708.500 L1360 707.600 V796 L1357 797 Z" fill="#c9a55e"></path>
<path d="M1297.800 725.200 L1351.500 709.700 V795.500 L1297.800 811 Z" fill="#3a3a3a"></path>
<path d="M1351.500 709.700 L1354 709 V794.800 L1351.500 795.500 Z" fill="#4c4c4c"></path>
<path d="M1297.800 794.200 L1319.700 802.700 L1297.800 809.500 Z" fill="#707070"></path>
<path d="M1295 814.500 L1360 795.700 V798.200 L1295 817 Z" fill="#c9a55e"></path>
<path d="M1295 820 L1365 799.800 V802.500 L1295 822.800 Z" fill="#c9a55e"></path>
</g>
<!-- window 2 -->
<g stroke-linejoin="round">
<path d="M1631.400 622.700 L1703.300 602.500 V703 L1704.800 706.600 L1631.400 728.300 Z" fill="#0c0c0c" stroke="#111" stroke-width="1"></path>
<path d="M1698 605 L1702.800 603.700 V702 L1698 699.500 Z" fill="#606060"></path>
<path d="M1632.400 624.800 L1698 606.400 V610 L1632.400 628.300 Z" fill="#c9a55e"></path>
<path d="M1694 611.500 L1697.500 610.500 V699.500 L1694 700.500 Z" fill="#c9a55e"></path>
<path d="M1634 628.500 L1689.500 613 V698 L1634 714 Z" fill="#3a3a3a"></path>
<path d="M1632.400 628.300 L1633.600 628 V722 L1632.400 722.300 Z" fill="#a88a4c"></path>
<path d="M1632.400 717.500 L1698 699 V701.500 L1632.400 720.200 Z" fill="#c9a55e"></path>
<path d="M1632.400 723.200 L1703 702.800 V705.600 L1632.400 726.200 Z" fill="#c9a55e"></path>
</g>
<!-- canopy shadow on wall -->
<path d="M1544.300 676 L1581 666.800 Q1583 680 1586.300 689.500 Q1586.500 692 1584 693 L1544.300 707.200 Z" fill="#adadad"></path>
<!-- door -->
<path d="M1512 683.500 L1544.500 674.500 V833.500 L1512 842 Z" fill="#0c0a06"></path>
<path d="M1512 832 L1525 830 L1535.800 833.500 L1539.500 834.200 L1544.600 833.500 L1544.600 834 L1512 842.500 Z" fill="#777"></path>
<path d="M1512.600 685 L1524.600 681.700 V830.100 L1512.600 832.100 Z" fill="#c8a868"></path>
<path d="M1517.400 699.500 L1520.500 698.700 V758.500 L1517.400 759.300 Z M1517.400 776 L1520.500 775.200 V818.200 L1517.400 819 Z" fill="#2a200e"></path>
<path d="M1513 698.800 L1517.400 697.600 M1513 760.800 L1517.400 759.600 M1513 775 L1517.400 773.800 M1513 819.800 L1524.500 817.500 M1513 691.500 L1517.400 690.300 M1513 694.500 L1517.400 693.300" stroke="#2a200e" stroke-width="1.100"></path>
<path d="M1513 699 V759 M1513 776 V819" stroke="#a88a4c" stroke-width="0.800"></path>
<path d="M1525.200 681.500 L1538.200 678 V833.800 L1525.200 830 Z" fill="#5c4c30"></path>
<path d="M1525.200 681.500 L1528.800 680.500 V831 L1525.200 830 Z" fill="#3a3020"></path>
<path d="M1525.200 681.500 L1536 678.500 V700 L1528.800 708 L1525.200 712 Z" fill="#4c3e26" opacity="0.600"></path>
<path d="M1539.700 676.700 L1544.300 675.400 V833.300 L1539.700 834 Z" fill="#c9a765"></path>
<path d="M1512.600 685 L1524.600 681.700 V712 L1512.600 722 Z" fill="#3a2a10" opacity="0.220"></path><circle cx="1524" cy="751.700" r="3" fill="#0a0a0a"></circle>
<path d="M1512.300 842.600 L1629.500 810.300" stroke="#1a1a1a" stroke-width="1.200" fill="none"></path>
<path d="M1512.300 840.700 L1629.500 808.400" stroke="#555" stroke-width="0.700" fill="none"></path>
<!-- slab -->
<g stroke="#111" stroke-width="1.350" stroke-linejoin="round">
<path d="M1408.200 874.400 L1439.800 864 L1501.100 889 L1512 886 V845 L1629 810 L1718.400 845.800 L1496.700 910.900 Z" fill="#777"></path>
<path d="M1408.200 874.400 L1496.700 910.900 V928.300 L1408.200 891.800 Z" fill="#404040"></path>
<path d="M1496.700 910.900 L1718.400 845.800 V864.300 L1496.700 928.300 Z" fill="#8a8a8a"></path>
<!-- pillar -->
<path d="M1439.800 662.200 L1501.100 686.700 V889.100 L1439.800 864.300 Z" fill="#5f5f5f"></path>
<path d="M1501.100 686.700 L1512 683.600 V886 L1501.100 889.100 Z" fill="#cfcfcf"></path>
<!-- canopy -->
<path d="M1439.400 650.500 L1564.200 614.300 L1625.900 639.600 L1501.100 675.800 Z" fill="#b3b3b3"></path>
<path d="M1501.100 675.800 L1625.900 639.600 V651.700 L1501.100 686.700 Z" fill="#cfcfcf"></path>
<path d="M1439.400 650.500 L1501.100 675.800 V686.700 L1439.400 662.200 Z" fill="#6e6e6e"></path>
</g>
</svg>
<div id="status">
<span style="left: 7px; letter-spacing: -0.469px;">Select element</span>
<div class="ssep" style="left:903px"></div>
<span style="left: 913px; letter-spacing: -0.067px;">Vertex Sync: Offline</span>
<div class="ssep" style="left:1644px"></div><span style="left: 1663px; letter-spacing: -0.257px;">dx 6755</span>
<div class="ssep" style="left:1743px"></div><span style="left: 1751px; letter-spacing: -0.324px;">dy 13216</span>
<div class="ssep" style="left:1831px"></div><span style="left: 1838px; letter-spacing: -0.243px;">dz 9123</span>
</div>

</body></html>
